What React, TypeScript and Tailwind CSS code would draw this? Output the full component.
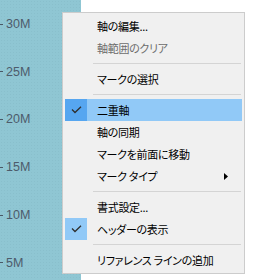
type Item =
  | { kind: "sep" }
  | {
      kind: "item";
      label: string;
      disabled?: boolean;
      checked?: boolean;
      active?: boolean;
      submenu?: boolean;
    };

const items: Item[] = [
  { kind: "item", label: "軸の編集..." },
  { kind: "item", label: "軸範囲のクリア", disabled: true },
  { kind: "sep" },
  { kind: "item", label: "マークの選択" },
  { kind: "sep" },
  { kind: "item", label: "二重軸", checked: true, active: true },
  { kind: "item", label: "軸の同期" },
  { kind: "item", label: "マークを前面に移動" },
  { kind: "item", label: "マーク タイプ", submenu: true },
  { kind: "sep" },
  { kind: "item", label: "書式設定..." },
  { kind: "item", label: "ヘッダーの表示", checked: true },
  { kind: "sep" },
  { kind: "item", label: "リファレンス ラインの追加" },
];

const ticks = ["30M", "25M", "20M", "15M", "10M", "5M"];

const CheckIcon = () => (
  <svg width="11" height="8" viewBox="0 0 11 8" fill="none">
    <path d="M1 3.5 L4 6.5 L10 0.8" stroke="#2f2f2f" strokeWidth="1.3" />
  </svg>
);

export default function App() {
  return (
    <div className="relative w-[262px] h-[280px] bg-white overflow-hidden">
      {/* axis strip */}
      <div className="w-[81px] h-[280px] bg-[#8fc6d3] bg-[radial-gradient(#89bfcc_0.5px,transparent_0.7px)] bg-[length:3px_3px] flex flex-col gap-[29.8px] pt-[15px]">
        {ticks.map((t) => (
          <div key={t} className="flex items-center h-[18px] gap-[3px]">
            <span className="w-[3px] h-px bg-[#4a5866]" />
            <span className="font-['Liberation_Sans',sans-serif] text-[12.5px] leading-none text-[#4d5b6b]">
              {t}
            </span>
          </div>
        ))}
      </div>

      {/* context menu */}
      <div className="absolute left-[62px] top-[12px] w-[183px] h-[262px] bg-[#f0f0f0] border border-[#cccccc] px-[2px] pt-[2px] font-['Noto_Sans_CJK_JP',sans-serif] [font-feature-settings:'palt'] text-[11px] tracking-[-0.3px] text-black">
        {items.map((it, i) =>
          it.kind === "sep" ? (
            <div key={i} className="h-[9px] pt-[4px] pl-[28px] pr-[1px]">
              <div className="h-px bg-[#d4d4d4]" />
            </div>
          ) : (
            <div
              key={i}
              className={`flex items-center h-[22px] ${it.active ? "bg-[#91c9f7]" : ""}`}
            >
              <div
                className={`w-[22px] h-[22px] flex items-center justify-center ${
                  it.checked ? (it.active ? "bg-[#56a6f0]" : "bg-[#91c9f7]") : ""
                }`}
              >
                {it.checked && <CheckIcon />}
              </div>
              <span
                className={`pl-[10px] leading-none whitespace-nowrap flex-1 ${
                  it.disabled ? "text-[#6d6d6d]" : ""
                }`}
              >
                {it.label}
              </span>
              {it.submenu && (
                <svg width="4" height="7" viewBox="0 0 4 7" className="mr-[14px]">
                  <path d="M0 0 L4 3.5 L0 7 Z" fill="#000" />
                </svg>
              )}
            </div>
          )
        )}
      </div>
    </div>
  );
}
